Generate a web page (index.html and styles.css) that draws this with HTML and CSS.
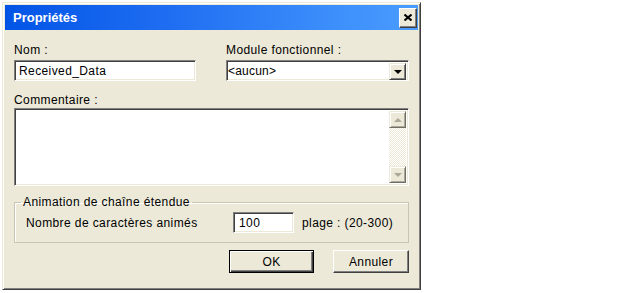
FILE: index.html
```html
<!DOCTYPE html>
<html lang="fr">
<head>
    <meta charset="UTF-8">
    <title>Propriétés</title>
    <link rel="stylesheet" href="styles.css">
</head>
<body>
    <div class="dialog">
        <div class="titlebar">
            <span class="title">Propriétés</span>
            <button class="close" title="Fermer">
                <svg width="8" height="7" viewBox="0 0 8 7"><path d="M0.5 0.5 L7.5 6.5 M7.5 0.5 L0.5 6.5" stroke="#000" stroke-width="2" fill="none"/></svg>
            </button>
        </div>
        <div class="content">
            <div class="top-row">
                <div class="field">
                    <label>Nom :</label>
                    <div class="input">Received_Data</div>
                </div>
                <div class="field">
                    <label>Module fonctionnel :</label>
                    <div class="input select">
                        <span class="value">&lt;aucun&gt;</span>
                        <span class="drop"><span class="arrow down black"></span></span>
                    </div>
                </div>
            </div>
            <div class="field comment">
                <label>Commentaire :</label>
                <div class="input textarea">
                    <div class="scrollbar">
                        <span class="scroll-btn"><span class="arrow up"></span></span>
                        <span class="track"></span>
                        <span class="scroll-btn"><span class="arrow down"></span></span>
                    </div>
                </div>
            </div>
            <fieldset class="group">
                <legend>Animation de chaîne étendue</legend>
                <div class="group-row">
                    <span class="group-label">Nombre de caractères animés</span>
                    <div class="input small">100</div>
                    <span class="range">plage : (20-300)</span>
                </div>
            </fieldset>
            <div class="buttons">
                <button class="btn default">OK</button>
                <button class="btn">Annuler</button>
            </div>
        </div>
    </div>
</body>
</html>
```

FILE: styles.css
```css
body {
    margin: 0;
    background-color: #fff;
    font-family: "Liberation Sans", Arial, sans-serif;
    font-size: 12px;
    line-height: 14px;
    letter-spacing: 0.4px;
    color: #000;
}

.dialog {
    margin: 2px 0 0 2px;
    width: 419px;
    height: 288px;
    box-sizing: border-box;
    background-color: #ece9d8;
    border: 1px solid;
    border-color: #ece9d8 #404040 #404040 #ece9d8;
    box-shadow: inset 1px 1px 0 #fff, inset -1px -1px 0 #808080;
    padding: 2px;
    display: flex;
    flex-direction: column;
}

.titlebar {
    height: 25px;
    display: flex;
    align-items: center;
    justify-content: space-between;
    padding: 0 1px 0 8px;
    background: linear-gradient(to right, #0254e6 0%, #1f6ef2 40%, #3d8ffb 80%, #4a9cff 100%);
}

.title {
    color: #fff;
    font-weight: bold;
    font-size: 13px;
    letter-spacing: 0;
}

.close {
    width: 18px;
    height: 20px;
    padding: 0;
    display: flex;
    align-items: center;
    justify-content: center;
    background-color: #ece9d8;
    border: 1px solid;
    border-color: #fff #404040 #404040 #fff;
    box-shadow: inset -1px -1px 0 #808080;
}

.content {
    padding: 13px 9px 0 9px;
    display: flex;
    flex-direction: column;
}

.top-row {
    display: grid;
    grid-template-columns: 182px 183px;
    column-gap: 30px;
}

.field label {
    display: block;
    margin-bottom: 3px;
}

.input {
    height: 21px;
    box-sizing: border-box;
    background-color: #fff;
    border: 1px solid;
    border-color: #808080 #fff #fff #808080;
    box-shadow: inset 1px 1px 0 #404040, inset -1px -1px 0 #ece9d8;
    padding: 3px 4px 0 4px;
    white-space: nowrap;
}

.select {
    display: flex;
    justify-content: space-between;
    padding: 2px 2px 2px 1px;
}

.select .value {
    padding-top: 1px;
    letter-spacing: 0.2px;
}

.drop {
    width: 17px;
    height: 17px;
    box-sizing: border-box;
    background-color: #ece9d8;
    border: 1px solid;
    border-color: #ece9d8 #404040 #404040 #ece9d8;
    box-shadow: inset 1px 1px 0 #fff, inset -1px -1px 0 #808080;
    display: flex;
    align-items: center;
    justify-content: center;
}

.arrow {
    width: 0;
    height: 0;
    border-left: 4px solid transparent;
    border-right: 4px solid transparent;
}

.arrow.down {
    border-top: 4px solid #aca899;
}

.arrow.up {
    border-bottom: 4px solid #aca899;
}

.arrow.down.black {
    border-top-color: #000;
}

.comment {
    margin-top: 12px;
}

.comment label {
    margin-bottom: 1px;
}

.textarea {
    height: 78px;
    padding: 2px;
    display: flex;
    justify-content: flex-end;
}

.scrollbar {
    width: 17px;
    display: flex;
    flex-direction: column;
}

.scroll-btn {
    height: 17px;
    box-sizing: border-box;
    background-color: #ece9d8;
    border: 1px solid;
    border-color: #ece9d8 #716f64 #716f64 #ece9d8;
    box-shadow: inset 1px 1px 0 #fff, inset -1px -1px 0 #aca899;
    display: flex;
    align-items: center;
    justify-content: center;
}

.track {
    flex: 1;
    background: repeating-conic-gradient(#fff 0 25%, #ece9d8 0 50%) 0 0 / 2px 2px;
}

.group {
    margin: 9px 0 0 0;
    padding: 3px 10px 9px 10px;
    border: 1px solid #c8c5b2;
    box-shadow: inset 1px 1px 0 #fff;
}

.group legend {
    padding: 0 2px;
    margin-left: -4px;
}

.group-row {
    display: flex;
    align-items: center;
}

.group-label {
    width: 207px;
    padding-left: 1px;
}

.input.small {
    width: 61px;
    padding-left: 5px;
}

.range {
    margin-left: 8px;
}

.buttons {
    margin-top: 7px;
    display: flex;
    justify-content: flex-end;
    gap: 19px;
}

.btn {
    height: 23px;
    width: 76px;
    padding: 0;
    font-family: inherit;
    font-size: 12px;
    letter-spacing: 0.4px;
    color: #000;
    background-color: #ece9d8;
    border: 1px solid;
    border-color: #fff #404040 #404040 #fff;
    box-shadow: inset -1px -1px 0 #808080;
}

.btn.default {
    width: 85px;
    border-color: #000;
    box-shadow: inset 1px 1px 0 #fff, inset -1px -1px 0 #404040, inset -2px -2px 0 #808080;
}
```
